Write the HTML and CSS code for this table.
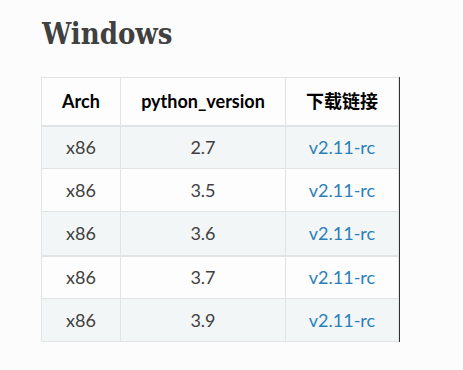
FILE: index.html
```html
<!DOCTYPE html>
<html lang="zh">
<head>
    <meta charset="UTF-8">
    <title>Windows</title>
    <link rel="stylesheet" href="styles.css">
</head>
<body>
    <div class="document">
        <h2>Windows</h2>

        <div class="table-wrap">
            <table class="docutils">
                <colgroup>
                    <col class="col-arch">
                    <col class="col-py">
                    <col class="col-link">
                </colgroup>
                <thead>
                    <tr>
                        <th>Arch</th>
                        <th>python_version</th>
                        <th>下载链接</th>
                    </tr>
                </thead>
                <tbody>
                    <tr class="row-odd"><td>x86</td><td>2.7</td><td><a href="#">v2.11-rc</a></td></tr>
                    <tr class="row-even"><td>x86</td><td>3.5</td><td><a href="#">v2.11-rc</a></td></tr>
                    <tr class="row-odd split"><td>x86</td><td>3.6</td><td><a href="#">v2.11-rc</a></td></tr>
                    <tr class="row-even"><td>x86</td><td>3.7</td><td><a href="#">v2.11-rc</a></td></tr>
                    <tr class="row-odd"><td>x86</td><td>3.9</td><td><a href="#">v2.11-rc</a></td></tr>
                </tbody>
            </table>
        </div>
    </div>
</body>
</html>
```

FILE: styles.css
```css
/* 基本 */
body {
    margin: 0;
    background-color: #fcfcfc;
    color: #404040;
    font-family: 'Lato', 'Noto Sans CJK SC', sans-serif;
    font-size: 16px;
}

.document {
    padding: 16px 0 0 41px;
}

/* 见出し */
h2 {
    font-family: 'DejaVu Serif', 'Noto Sans CJK SC', serif;
    font-stretch: condensed;
    font-weight: bold;
    font-size: 29px;
    line-height: 36px;
    margin: 0 0 25px 1px;
    color: #404040;
}

/* 表格 */
.table-wrap {
    display: inline-block;
    border-right: 1px solid #333;
}

table.docutils {
    border-collapse: collapse;
    border-spacing: 0;
    table-layout: fixed;
    width: 357px;
}
.col-arch { width: 79px; }
.col-py { width: 165px; }
.col-link { width: 113px; }

table.docutils th,
table.docutils td {
    border: 1px solid #e1e4e5;
    text-align: center;
    padding: 0;
    font-size: 18px;
    line-height: 22px;
}
table.docutils thead tr {
    height: 48px;
}
table.docutils th {
    font-weight: bold;
    color: #000;
    border-bottom: 2px solid #e1e4e5;
    background-color: #fdfdfd;
}
table.docutils tbody tr {
    height: 43px;
}
table.docutils tbody tr.split {
    height: 44px;
}
.row-odd td { background-color: #f3f6f6; }
.row-even td { background-color: #fdfdfd; }
table.docutils .split td { border-bottom: 2px solid #e1e4e5; }

a {
    color: #2980b9;
    text-decoration: none;
}
```
